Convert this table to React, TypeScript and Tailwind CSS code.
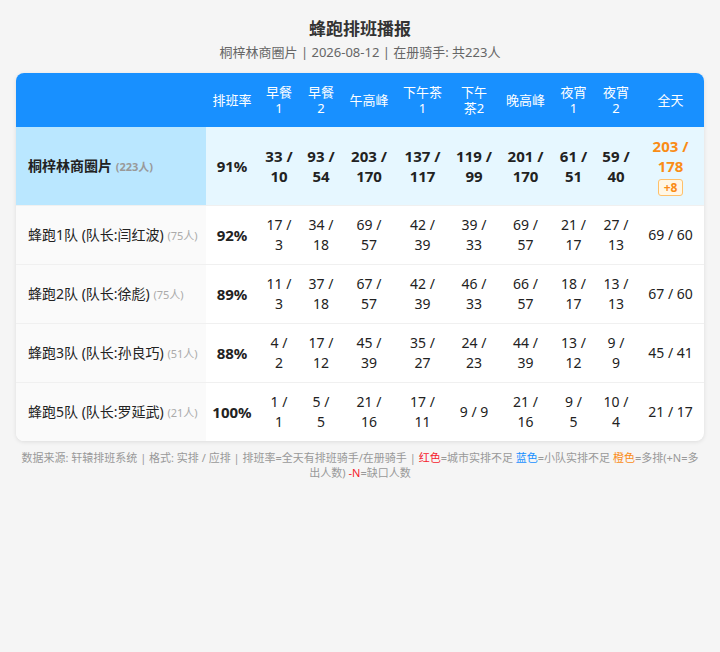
import React from "react";

interface TeamRow {
  name: string;
  leader?: string;
  count: number;
  rate: string;
  slots: string[];
  total: string;
}

const headers = [
  { label: "排班率", w: "w-[52px]" },
  { label: "早餐1", w: "w-[42px]" },
  { label: "早餐2", w: "w-[42px]" },
  { label: "午高峰", w: "w-[54px]" },
  { label: "下午茶1", w: "w-[53px]" },
  { label: "下午茶2", w: "w-[50px]" },
  { label: "晚高峰", w: "w-[53px]" },
  { label: "夜宵1", w: "w-[43px]" },
  { label: "夜宵2", w: "w-[42px]" },
  { label: "全天", w: "w-[67px]" },
];

// "\n" marks where the cell breaks onto a second line
const city = {
  name: "桐梓林商圈片",
  count: 223,
  rate: "91%",
  slots: ["33 /\n10", "93 /\n54", "203 /\n170", "137 /\n117", "119 /\n99", "201 /\n170", "61 /\n51", "59 /\n40"],
  total: "203 /\n178",
  diff: "+8",
};

const teams: TeamRow[] = [
  { name: "蜂跑1队", leader: "闫红波", count: 75, rate: "92%", slots: ["17 /\n3", "34 /\n18", "69 /\n57", "42 /\n39", "39 /\n33", "69 /\n57", "21 /\n17", "27 /\n13"], total: "69 / 60" },
  { name: "蜂跑2队", leader: "徐彪", count: 75, rate: "89%", slots: ["11 /\n3", "37 /\n18", "67 /\n57", "42 /\n39", "46 /\n33", "66 /\n57", "18 /\n17", "13 /\n13"], total: "67 / 60" },
  { name: "蜂跑3队", leader: "孙良巧", count: 51, rate: "88%", slots: ["4 /\n2", "17 /\n12", "45 /\n39", "35 /\n27", "24 /\n23", "44 /\n39", "13 /\n12", "9 /\n9"], total: "45 / 41" },
  { name: "蜂跑5队", leader: "罗延武", count: 21, rate: "100%", slots: ["1 /\n1", "5 /\n5", "21 /\n16", "17 /\n11", "9 / 9", "21 /\n16", "9 /\n5", "10 /\n4"], total: "21 / 17" },
];

export default function App() {
  return (
    <div
      className="min-h-[652px] bg-[#f5f5f5] pt-[17px] text-[#222]"
      style={{ fontFamily: '"Noto Sans", "Noto Sans CJK SC", sans-serif' }}
    >
      <h1 className="text-center text-[17px] font-bold leading-6 text-[#333]">蜂跑排班播报</h1>
      <div className="mt-px text-center text-[13px] leading-5 text-[#666]">
        桐梓林商圈片 | 2026-08-12 | 在册骑手: 共223人
      </div>

      <div className="mx-4 mt-[11px] overflow-hidden rounded-lg bg-white shadow-[0_1px_4px_rgba(0,0,0,0.1)]">
        <table className="w-full table-fixed border-collapse">
          <thead>
            <tr className="bg-[#1890ff] text-[13px] font-normal leading-4 text-white">
              <th className="w-[190px] py-[11px]"></th>
              {headers.map((h) => (
                <th key={h.label} className={`${h.w} px-1.5 py-[11px] text-center font-normal`}>
                  {h.label}
                </th>
              ))}
            </tr>
          </thead>
          <tbody>
            <tr className="border-b border-[#f0f0f0] bg-[#e6f7ff] text-[15px] font-bold leading-5">
              <td className="whitespace-nowrap bg-[#bae7ff] py-[9px] pl-3 text-[14px]">
                {city.name} <span className="text-[11px] font-bold text-[#999]">({city.count}人)</span>
              </td>
              <td className="px-1 py-[9px] text-center">{city.rate}</td>
              {city.slots.map((s, i) => (
                <td key={i} className="whitespace-pre-line px-0.5 py-[9px] text-center">
                  {s}
                </td>
              ))}
              <td className="whitespace-pre-line px-1 py-[9px] text-center text-[#fa8c16]">
                <div>{city.total}</div>
                <div className="mt-[3px] flex justify-center">
                  <span className="rounded-[3px] border border-[#ffc069] bg-[#fff7e6] px-[5px] text-[12px] leading-[15px]">
                    {city.diff}
                  </span>
                </div>
              </td>
            </tr>
            {teams.map((t, idx) => (
              <tr
                key={t.name}
                className={`${idx < teams.length - 1 ? "border-b border-[#f0f0f0]" : ""} text-[14px] leading-5`}
              >
                <td className="whitespace-nowrap bg-[#fafafa] py-[9px] pl-3">
                  {t.name} (队长:{t.leader}) <span className="text-[11px] text-[#aaa]">({t.count}人)</span>
                </td>
                <td className="px-1 py-[9px] text-center text-[15px] font-bold">{t.rate}</td>
                {t.slots.map((s, i) => (
                  <td key={i} className="whitespace-pre-line px-0.5 py-[9px] text-center">
                    {s}
                  </td>
                ))}
                <td className="whitespace-nowrap px-1 py-[9px] text-center">{t.total}</td>
              </tr>
            ))}
          </tbody>
        </table>
      </div>

      <p className="mx-auto mt-[9px] w-[680px] text-center text-[11px] leading-[15px] text-[#999]">
        数据来源: 轩辕排班系统 | 格式: 实排 / 应排 | 排班率=全天有排班骑手/在册骑手 |{" "}
        <span className="text-[#f5222d]">红色</span>=城市实排不足{" "}
        <span className="text-[#1890ff]">蓝色</span>=小队实排不足{" "}
        <span className="text-[#fa8c16]">橙色</span>=多排(+N=多<wbr />出人数){" "}
        <span className="text-[#f5222d]">-N</span>=缺口人数
      </p>
    </div>
  );
}
